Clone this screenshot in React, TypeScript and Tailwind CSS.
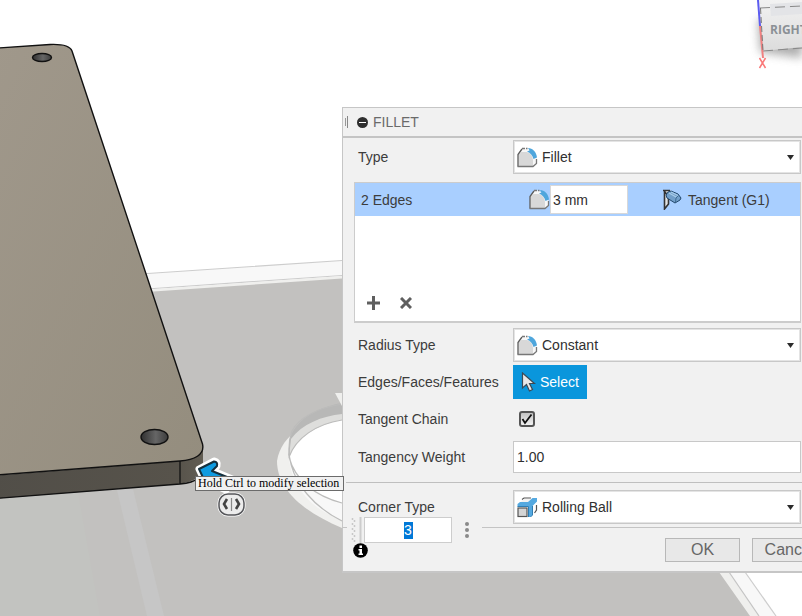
import React, { useState } from 'react';

const labelClass = 'w-[155px] shrink-0 pl-1 text-sm leading-5 text-[#3c3c3c]';

function FilletIcon() {
  return (
    <svg width="21" height="21" viewBox="0 0 21 21" className="shrink-0" aria-hidden="true">
      <path d="M1 19V7L6 1.500H10L19.500 11V16L16.500 19.500H1Z" fill="#f7f7f7" />
      <path d="M1.500 19V8L4.500 5H10C13.500 6.500 15.500 9 16 13V19Z" fill="#d8d8d8" />
      <path d="M11 1C15.500 1 19.500 5 20 10.500L16.500 12C15.500 8.500 13.500 6 10 4.500L12.500 3.500Z" fill="#4fa6dc" />
      <path d="M1 19.500V7.500L5 2" fill="none" stroke="#5c5c5c" strokeWidth="1.300" />
      <path d="M5 1.500H10.500" stroke="#777" strokeWidth="1.300" strokeDasharray="3 1" />
      <path d="M.5 19.500H16L19.500 16.500V12" fill="none" stroke="#777" strokeWidth="1.300" />
    </svg>
  );
}

function RollingBallIcon() {
  return (
    <svg width="21" height="21" viewBox="0 0 21 21" className="shrink-0" aria-hidden="true">
      <path d="M5 2.500L7 1H14M19.500 8V13L17.500 16" fill="none" stroke="#555" strokeWidth="1.200" />
      <path d="M5 3.500L7 2H14L12 5H4Z" fill="#f3f3f3" />
      <rect x="1" y="11" width="9" height="8.500" fill="#d5d5d5" stroke="#555" strokeWidth="1.200" />
      <path d="M.5 9.500V7L3 5H11L15.500 1H20V4.500L15.500 9V18L13.500 20H11.500V9.500Z" fill="#55a9e0" />
      <path d="M.5 9.500H11.500V20M15.500 9V18L13.500 20" fill="none" stroke="#2f7db3" />
    </svg>
  );
}

function TangentIcon() {
  return (
    <svg width="20" height="21" viewBox="0 0 20 21" className="shrink-0" aria-hidden="true">
      <path d="M1 1H9L7 5L6 16L2 20V3Z" fill="#e6e6e6" />
      <path d="M1 1.500H8M2.500 2V20L6.500 15V7M3 3L6 7" fill="none" stroke="#333" strokeWidth="1.600" />
      <path d="M6 3L9 2L16 5L19 9L18 11L13 14L5 9L4 6Z" fill="#729fc9" stroke="#23496d" />
      <path d="M7 4L15 8.500M9 3L16 6.500" stroke="#a9cde9" strokeWidth="1.200" />
      <path d="M16.500 6.500L14 9L13.500 13" fill="none" stroke="#3f6b92" />
    </svg>
  );
}

function DropDown({ id, value, options, icon }: { id: string; value: string; options: string[]; icon: React.ReactNode }) {
  return (
    <div className="relative flex h-[34px] min-w-0 flex-1 items-center border border-[#c8c8c8] bg-white ring-1 ring-inset ring-[#e4e4e4]">
      <span className="pointer-events-none absolute left-[3px]">{icon}</span>
      <select
        id={id}
        defaultValue={value}
        className="h-full w-full appearance-none bg-transparent pl-7 text-sm text-[#303030] outline-none"
      >
        {options.map((o) => (
          <option key={o}>{o}</option>
        ))}
      </select>
      <svg width="7" height="5" viewBox="0 0 7 5" className="pointer-events-none absolute right-[6px]" aria-hidden="true">
        <path d="M0 0H7L3.500 5Z" fill="#2b2b2b" />
      </svg>
    </div>
  );
}

function Scene() {
  return (
    <svg
      className="absolute inset-0 h-full w-full"
      viewBox="0 0 802 616"
      preserveAspectRatio="xMinYMin slice"
      aria-hidden="true"
    >
      <defs>
        <linearGradient id="plateTop" x1="0" y1="0" x2="1" y2="1">
          <stop offset="0" stopColor="#a0988b" />
          <stop offset="1" stopColor="#948d7e" />
        </linearGradient>
        <linearGradient id="plateSide" x1="0" y1="0" x2="1" y2="0">
          <stop offset="0" stopColor="#514e48" />
          <stop offset=".88" stopColor="#57534b" />
          <stop offset="1" stopColor="#625d53" />
        </linearGradient>
        <linearGradient id="hole" x1="0" y1="0" x2="1" y2="0">
          <stop offset="0" stopColor="#303030" />
          <stop offset=".55" stopColor="#666" />
          <stop offset="1" stopColor="#3c3c3c" />
        </linearGradient>
        <linearGradient id="cubeFace" x1="0" y1="0" x2="0" y2="1">
          <stop offset="0" stopColor="#f2f2f2" />
          <stop offset="1" stopColor="#dcdcdc" />
        </linearGradient>
        <filter id="soft" x="-50%" y="-50%" width="200%" height="200%">
          <feGaussianBlur stdDeviation="5" />
        </filter>
      </defs>

      {/* ground plate */}
      <path d="M0 283L342 260.500L540 250L785 616H0Z" fill="#f8f8f8" />
      <path d="M140 274L342 260.500M140 289.500L342 275.500" stroke="#cdcdcd" strokeWidth="1.200" />
      <path d="M745 572L776 616H802V572Z" fill="#fff" />
      <path d="M745 572L776 616" stroke="#cdcdcd" strokeWidth="1.200" />
      <path d="M140 290L342 276L600 262L729 572L759 616H0V300Z" fill="#efefed" />
      <path d="M729 572L759 616" stroke="#c4c4c4" strokeWidth="1.200" />
      <path d="M0 302L342 278.500L520 268L719 572L750 616H0Z" fill="#c2c1bf" />
      <path d="M0 498L78 492L100 616H0Z" fill="#c2c3c0" />
      <path d="M117 490L133 489L164 616H147Z" fill="#c6c6c6" />

      {/* circular cut-out */}
      <path d="M342 415C310 418 281 434 277 461C277 490 304 512 342 528Z" fill="#f0f0ee" />
      <path d="M342 403C317 407 296 420 290 438L288 457C298 436 317 424 342 420Z" fill="#b8b8b7" />
      <path d="M342 414C322 416 302 424 291 439L289 457C300 435 321 424 342 420Z" fill="#dededc" />
      <path d="M342 420C318 424 297 437 289 457C293 482 316 496 342 503Z" fill="#fff" />
      <path d="M289 457C293 482 316 496 342 503V520C313 510 291 488 289 457Z" fill="#f8f8f8" />
      <path
        d="M342 404C316 408 298 419 292 431C284 454 293 478 307 494C317 506 330 515 342 521M342 420C316 424 296 438 289 457C295 480 315 496 342 503"
        fill="none"
        stroke="#bcbcbb"
        strokeWidth="1.200"
      />
      <path d="M335 393H342V406Z" fill="#efefed" />

      {/* solid part */}
      <path d="M-10 476L180 461L203 447V472Q197 481 180 484L-10 499Z" fill="url(#plateSide)" />
      <path
        d="M-10 48.500L50 44.500C62 44 70 46 72 51L202.500 444C205 455 194 460 180 461L-10 475.500Z"
        fill="url(#plateTop)"
        stroke="#111"
        strokeWidth="1.400"
      />
      <path d="M-10 499L180 484Q193 483 198 478M180 461V484" fill="none" stroke="#111" strokeWidth="1.300" />
      <ellipse cx="42" cy="57.500" rx="9.500" ry="4" fill="url(#hole)" stroke="#111" strokeWidth="1.400" />
      <ellipse cx="154.500" cy="437" rx="13.500" ry="7.500" fill="url(#hole)" stroke="#111" strokeWidth="1.400" />

      {/* drag arrow and flip handle */}
      <g strokeLinejoin="round">
        <path
          d="M199 469L214 461Q218 462 217 466L213 471L232 479L226 490L207 481V486Z"
          fill="#fff"
          stroke="#fff"
          strokeWidth="7"
        />
        <path
          d="M199 469L214 461.500Q218 462 217 466L212 471L232 479L226 490L207 481V486Z"
          fill="#0f9be0"
          stroke="#16303d"
          strokeWidth="2"
        />
      </g>
      <rect x="219" y="494" width="25" height="21" rx="9" fill="#f3f3f3" stroke="#fff" strokeWidth="3" />
      <rect x="219" y="494" width="25" height="21" rx="9" fill="#ececec" stroke="#55565a" strokeWidth="1.500" />
      <path d="M227 499L224 504L227 509M236 499L239 504L236 509" fill="none" stroke="#444" strokeWidth="2.600" />
      <path d="M231.500 498V511" stroke="#888" strokeWidth="1.200" />

      {/* view cube */}
      <path d="M758 20L760 52L802 58V10Z" fill="#777" opacity=".6" filter="url(#soft)" />
      <path d="M759 0L763 51L802 47V0Z" fill="url(#cubeFace)" />
      <path d="M770 4L802 2V14L771 16Z" fill="#e3e4e7" />
      <path d="M760 8L802 6M763 51L802 48" stroke="#888" strokeWidth="1" strokeDasharray="10 5" />
      <path d="M758 0L760 26" stroke="#5c5cf0" strokeWidth="2" />
      <path d="M760 26L763 58" stroke="#f08080" strokeWidth="2" />
      <path d="M760.500 8L763 51" stroke="#777" strokeDasharray="6 3" />
      <path d="M759.500 58L765.500 68M765.500 58L759.500 68" stroke="#fa7777" strokeWidth="1.500" />
      <text x="770" y="34" fontFamily="Open Sans, sans-serif" fontSize="12" fontWeight="700" fill="#8b9095">
        RIGHT
      </text>
    </svg>
  );
}

function MiniToolbar() {
  const [radius, setRadius] = useState('3');
  return (
    <div className="absolute left-1 top-[409px] flex h-[44px] w-[135px] items-start">
      <div className="absolute inset-x-0 top-[9px] h-[20px] bg-[#f1f1f1]" />
      <svg width="13" height="26" viewBox="0 0 13 26" className="relative ml-1 shrink-0" aria-hidden="true">
        <path d="M1.500 1V26M3.500 3V26" stroke="#c8c8c8" strokeWidth="1.500" strokeDasharray="2 3" />
        <path d="M9.500 0V26" stroke="#cdcdcd" strokeWidth="2" />
      </svg>
      <div className="relative flex h-[26px] w-[88px] items-center justify-center border border-[#cdcdcd] bg-white">
        <input
          aria-label="Radius"
          value={radius}
          onChange={(e) => setRadius(e.target.value)}
          className="h-[17px] w-[9px] bg-[#0078d7] text-center text-sm leading-4 text-white outline-none"
        />
      </div>
      <button
        type="button"
        aria-label="More options"
        className="relative ml-3 flex h-[26px] w-[5px] flex-col items-center justify-center gap-[2px]"
      >
        <span className="size-1 rounded-full bg-[#8a8a8a]" />
        <span className="size-1 rounded-full bg-[#8a8a8a]" />
        <span className="size-1 rounded-full bg-[#8a8a8a]" />
      </button>
      <svg width="15" height="15" viewBox="0 0 15 15" className="absolute left-[6px] top-[26px]" aria-hidden="true">
        <circle cx="7.500" cy="7.500" r="7.300" fill="#000" />
        <path d="M6.500 2.500H9V5H6.500ZM5.500 6H9V10.500H10V12H5.500V10.500H6.500V7.500H5.500Z" fill="#fff" />
      </svg>
    </div>
  );
}

export default function App() {
  const [chain, setChain] = useState(true);
  return (
    <main className="relative min-h-screen overflow-hidden bg-white font-['Liberation_Sans',Arial,sans-serif]">
      <Scene />

      <section className="absolute -right-[26px] left-[342px] top-[107px] border border-b-2 border-[#c6c6c6] bg-[#f1f1f1]">
        <header className="flex h-[30px] items-center border-b-2 border-[#c4c4c4]">
          <span className="ml-[2px] h-2 w-px bg-[#999]" />
          <span className="ml-px h-3 w-px bg-[#888]" />
          <button type="button" aria-label="Collapse" className="ml-[9px] flex size-[11px] items-center justify-center rounded-full bg-[#2f2f2f]">
            <span className="h-px w-[7px] bg-white" />
          </button>
          <h1 className="ml-[5px] text-sm leading-5 text-[#6a6a6a]">FILLET</h1>
        </header>

        <form className="pl-[11px] pr-[26px] pt-[2px]" onSubmit={(e) => e.preventDefault()}>
          <div className="flex items-center">
            <label htmlFor="type" className={labelClass}>Type</label>
            <div className="flex min-w-0 flex-1 pl-1">
              <DropDown id="type" value="Fillet" options={['Fillet', 'Full Round Fillet']} icon={<FilletIcon />} />
            </div>
          </div>

          <div className="mt-2 flex h-[141px] flex-col justify-between border border-b-2 border-[#cccccc] bg-white">
            <div className="flex h-[33px] items-center bg-[#a9cfff] pl-[6px] text-sm text-[#3c3c3c]">
              <label htmlFor="radius" className="w-[168px] shrink-0">2 Edges</label>
              <FilletIcon />
              <input id="radius" defaultValue="3 mm" className="h-[29px] w-[78px] border border-[#d8d8d8] bg-white pl-[2px] text-[#303030] outline-none" />
              <span className="ml-[34px] flex items-center gap-[6px]">
                <TangentIcon />
                Tangent (G1)
              </span>
            </div>
            <div className="mb-[11px] flex gap-5 pl-3">
              <button type="button" aria-label="Add">
                <svg width="13" height="14" viewBox="0 0 13 14">
                  <path d="M6.500 0V14M0 7H13" stroke="#5f5f5f" strokeWidth="3" />
                </svg>
              </button>
              <button type="button" aria-label="Remove">
                <svg width="12" height="12" viewBox="0 0 12 12">
                  <path d="M1 1L11 11M11 1L1 11" stroke="#5f5f5f" strokeWidth="3" />
                </svg>
              </button>
            </div>
          </div>

          <div className="mt-[5px] flex items-center">
            <label htmlFor="radius-type" className={labelClass}>Radius Type</label>
            <div className="flex min-w-0 flex-1 pl-1">
              <DropDown id="radius-type" value="Constant" options={['Constant', 'Chord Length', 'Variable']} icon={<FilletIcon />} />
            </div>
          </div>

          <div className="mt-[3px] flex items-center">
            <span className={labelClass}>Edges/Faces/Features</span>
            <button type="button" className="ml-1 flex h-[34px] w-[74px] items-center gap-1 bg-[#0a96dc] pl-2 text-sm text-white">
              <svg width="15" height="20" viewBox="0 0 15 20" className="shrink-0" aria-hidden="true">
                <path d="M1.500 1V16L5.500 12.500L8.500 19L11.500 17.500L8.500 11.500H13.500Z" fill="#e8e8e8" stroke="#3c4a55" strokeWidth="1.200" />
              </svg>
              Select
            </button>
          </div>

          <div className="mt-[3px] flex h-[34px] items-center">
            <label htmlFor="chain" className={labelClass}>Tangent Chain</label>
            <span className="relative ml-[10px] flex size-4">
              <input
                id="chain"
                type="checkbox"
                checked={chain}
                onChange={(e) => setChain(e.target.checked)}
                className="size-4 appearance-none rounded-[3px] border-2 border-[#555] bg-linear-to-b from-[#c4c4c4] to-[#f2f2f2]"
              />
              {chain && (
                <svg width="16" height="16" viewBox="0 0 16 16" className="pointer-events-none absolute inset-0" aria-hidden="true">
                  <path d="M3.500 8L6 12L12.500 3.500" fill="none" stroke="#111" strokeWidth="1.800" />
                </svg>
              )}
            </span>
          </div>

          <div className="mt-[5px] flex items-center">
            <label htmlFor="weight" className={labelClass}>Tangency Weight</label>
            <div className="flex min-w-0 flex-1 pl-1">
              <input id="weight" defaultValue="1.00" className="h-8 w-full border border-[#c8c8c8] bg-white pl-[3px] text-sm text-[#303030] outline-none" />
            </div>
          </div>

          <hr className="-ml-2 -mr-[26px] mt-[9px] border-[#bfbfbf]" />

          <div className="mt-[7px] flex items-center">
            <label htmlFor="corner" className={labelClass}>Corner Type</label>
            <div className="flex min-w-0 flex-1 pl-1">
              <DropDown id="corner" value="Rolling Ball" options={['Rolling Ball', 'Setback']} icon={<RollingBallIcon />} />
            </div>
          </div>
        </form>

        <footer className="mt-[3px] flex justify-end gap-[12px] border-t border-[#c4c4c4] pb-[9px] pt-[10px]">
          <button type="button" className="h-6 w-[75px] border border-[#b8b8b8] bg-[#e8e8e8] text-base leading-5 text-[#666]">OK</button>
          <button type="button" className="h-6 w-[75px] border border-[#b8b8b8] bg-[#e8e8e8] text-base leading-5 text-[#666]">Cancel</button>
        </footer>

        <MiniToolbar />
      </section>

      <div role="tooltip" className="absolute left-[195px] top-[476px] h-[15px] w-[149px] whitespace-nowrap border border-[#6b6b6b] bg-[#f1f1f1] pl-[2px] font-['Liberation_Serif',serif] text-xs leading-[13px] text-black">
        Hold Ctrl to modify selection
      </div>
    </main>
  );
}
